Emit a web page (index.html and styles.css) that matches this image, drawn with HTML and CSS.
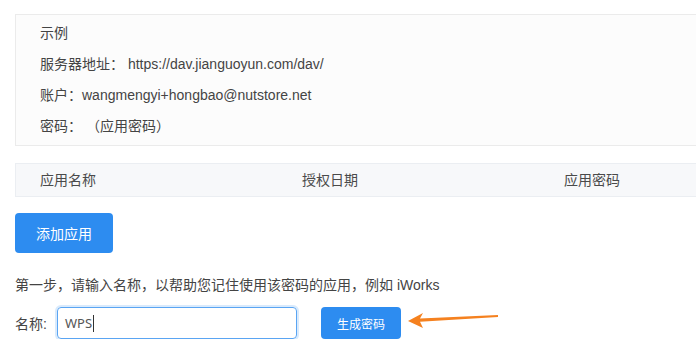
FILE: index.html
```html
<!DOCTYPE html>
<html lang="zh">
<head>
<meta charset="utf-8">
<link rel="stylesheet" href="styles.css">
</head>
<body>
<div class="page">
  <div class="example">
    <div class="line">示例</div>
    <div class="line">服务器地址： https://dav.jianguoyun.com/dav/</div>
    <div class="line">账户：wangmengyi+hongbao@nutstore.net</div>
    <div class="line">密码： （应用密码）</div>
  </div>
  <div class="thead">
    <div class="th">应用名称</div>
    <div class="th">授权日期</div>
    <div class="th">应用密码</div>
  </div>
  <button class="btn btn-add">添加应用</button>
  <div class="step">第一步，请输入名称，以帮助您记住使用该密码的应用，例如 iWorks</div>
  <div class="form-row">
    <label class="label">名称:</label>
    <div class="input"><span class="val">WPS</span><span class="caret"></span></div>
    <button class="btn btn-gen">生成密码</button>
  </div>
  <svg class="arrow" width="100" height="20" viewBox="0 0 100 20">
    <path d="M0 11 L15 3 L12 8.5 L90 5 L90 7 L12 11.8 L15 18 Z" fill="#f5811f"/>
  </svg>
</div>
</body>
</html>
```
FILE: styles.css
```css
html, body {
  margin: 0;
  padding: 0;
  overflow: hidden;
  background: #fff;
}
.page {
  position: relative;
  width: 800px;
  padding: 14px 0 0 15px;
  font-family: "Liberation Sans", "Noto Sans CJK SC", Arial, sans-serif;
  font-size: 14px;
  color: #444;
}
.example {
  border: 1px solid #ebebeb;
  background: #fcfcfc;
  padding: 3px 0 3px 24px;
}
.line {
  line-height: 31px;
  height: 31px;
}
.thead {
  margin-top: 17px;
  display: flex;
  height: 32px;
  border: 1px solid #ebeef2;
  background: #f7f8fa;
}
.th {
  flex: 0 0 262px;
  padding-left: 24px;
  box-sizing: border-box;
  line-height: 32px;
  color: #4a4a4a;
}
.btn {
  display: block;
  border: none;
  border-radius: 4px;
  background: #2d8cf0;
  color: #fff;
  font-family: "Liberation Sans", "Noto Sans CJK SC", sans-serif;
  padding: 0;
  cursor: pointer;
}
.btn-add {
  margin-top: 16px;
  width: 98px;
  height: 40px;
  font-size: 14px;
}
.step {
  margin-top: 22px;
  line-height: 20px;
}
.form-row {
  margin-top: 12px;
  display: flex;
  align-items: center;
  height: 32px;
}
.label {
  width: 42px;
}
.input {
  width: 240px;
  height: 32px;
  box-sizing: border-box;
  border: 1px solid #5aa5f3;
  border-radius: 4px;
  box-shadow: 0 0 0 2px rgba(45, 140, 240, 0.18);
  display: flex;
  align-items: center;
  padding-left: 7px;
  color: #555;
  font-family: "Noto Sans", "Noto Sans CJK SC", sans-serif;
  font-size: 13px;
}
.caret {
  display: inline-block;
  width: 1px;
  height: 17px;
  background: #333;
  margin-left: 1px;
}
.btn-gen {
  margin-left: 24px;
  width: 80px;
  height: 32px;
  font-size: 12px;
}
.arrow {
  position: absolute;
  left: 408px;
  top: 310px;
}
```
